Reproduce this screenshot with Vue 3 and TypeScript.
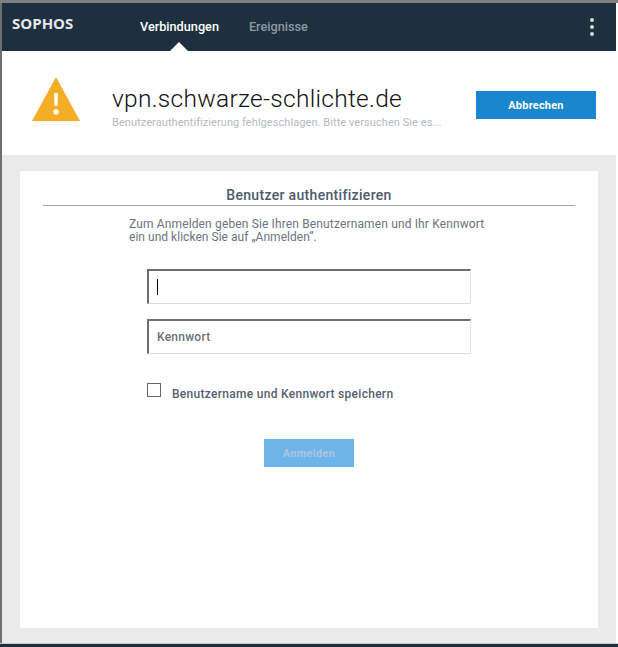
<script setup lang="ts">
const tabs: { label: string; active: boolean }[] = [
  { label: 'Verbindungen', active: true },
  { label: 'Ereignisse', active: false },
]
</script>

<template>
  <div class="window">
    <header class="bar">
      <div class="logo">SOPHOS</div>
      <nav class="tabs">
        <div v-for="t in tabs" :key="t.label" class="tab" :class="{ active: t.active }">{{ t.label }}</div>
      </nav>
      <div class="dots"><i></i><i></i><i></i></div>
    </header>
    <section class="info">
      <svg class="warn" width="48" height="45" viewBox="0 0 48 45">
        <path d="M24 0 L48 44 H0 Z" fill="#f3ae25" />
        <path d="M22 16 H26 L25.4 29 H22.6 Z" fill="#fff" />
        <circle cx="24" cy="35" r="2.7" fill="#fff" />
      </svg>
      <div class="host">
        <div class="name">vpn.schwarze-schlichte.de</div>
        <div class="status">Benutzerauthentifizierung fehlgeschlagen. Bitte versuchen Sie es...</div>
      </div>
      <button class="cancel">Abbrechen</button>
    </section>
    <main class="body">
      <div class="card">
        <h1 class="heading">Benutzer authentifizieren</h1>
        <p class="intro"><span class="l1">Zum Anmelden geben Sie Ihren Benutzernamen und Ihr Kennwort</span><br /><span class="l2">ein und klicken Sie auf „Anmelden“.</span></p>
        <div class="field"><span class="caret"></span></div>
        <div class="field second"><span class="ph">Kennwort</span></div>
        <label class="check"><span class="box"></span><span class="lbl">Benutzername und Kennwort speichern</span></label>
        <button class="submit">Anmelden</button>
      </div>
    </main>
    <div class="strip"></div>
  </div>
</template>

<style>
html, body { margin: 0; background: #fff; overflow: hidden; }
</style>

<style scoped>
.window {
  width: 618px; height: 647px; box-sizing: border-box;
  display: flex; flex-direction: column;
  border-top: 3px solid #7f7f7f;
  font-family: Roboto, "Liberation Sans", sans-serif;
  position: relative;
  background: #fff;
}
.window::before {
  content: ""; position: absolute; left: 0; top: 0; bottom: 4px; width: 2px; background: #6f6f6f; z-index: 2;
}
.bar {
  height: 48px; flex: none; background: #1e3040; margin-right: 2px;
  display: flex; align-items: center; position: relative;
}
.logo {
  margin-left: 12px; width: 62px; margin-top: -7px;
  font-family: "Open Sans", sans-serif; font-weight: 700; font-size: 14.5px; line-height: 16px;
  color: #e6e8ea; transform: scaleX(1.035); transform-origin: left center;
}
.tabs { display: flex; gap: 30px; margin-left: 66px; }
.tab { font-size: 12.7px; font-weight: 500; color: #8d98a3; position: relative; line-height: 48px; }
.tab.active { color: #fff; }
.tab.active::after {
  content: ""; position: absolute; left: 50%; bottom: 0; margin-left: -9px;
  border-left: 9px solid transparent; border-right: 9px solid transparent; border-bottom: 9px solid #fff;
}
.dots { margin-left: auto; margin-right: 22px; display: flex; flex-direction: column; gap: 3px; }
.dots i { width: 4px; height: 4px; border-radius: 50%; background: #d3d6d9; display: block; }
.info {
  height: 104px; flex: none; display: flex; align-items: center; box-sizing: border-box; padding: 0 20px 0 32px; margin-right: 2px;
}
.warn { flex: none; margin-top: -7px; }
.host { margin-left: 32px; margin-top: 8px; flex: 1; min-width: 0; }
.name { font-size: 24.5px; font-weight: 300; letter-spacing: 0.29px; color: #111; line-height: 28px; white-space: nowrap; }
.status { font-size: 11px; letter-spacing: 0.07px; color: #b4bac2; line-height: 13px; white-space: nowrap; margin-top: 3px; }
.cancel {
  flex: none; width: 120px; height: 28px; margin-top: 4px; background: #1a86cd; border: 0; color: #fff;
  font: 700 11px Roboto, sans-serif; letter-spacing: 0.2px; padding: 0;
}
.body { flex: 1; background: #eaeaea; margin-right: 2px; padding: 16px 18px 15px 20px; display: flex; min-height: 0; }
.card { flex: 1; background: #fff; box-sizing: border-box; padding: 14px 23px 0; display: flex; flex-direction: column; align-items: flex-start; }
.heading {
  align-self: stretch; margin: 0; border-bottom: 1px solid #a0a0a0; text-align: center;
  font-size: 14px; font-weight: 500; letter-spacing: 0.32px; color: #4d5a6c; line-height: 20px; height: 20px;
}
.intro { margin: 12px 0 0 86px; font-size: 12px; line-height: 12.5px; color: #6b7480; font-weight: 400; }
.l1 { letter-spacing: 0.14px; }
.l2 { letter-spacing: 0.03px; }
.field {
  margin: 26px 0 0 104px; width: 324px; height: 35px; box-sizing: border-box;
  border: 2px solid #6e6e6e; border-right: 1px solid #e2e2e2; border-bottom: 1px solid #dcdcdc;
  display: flex; align-items: center; padding-left: 8px;
}
.field.second { margin-top: 15px; }
.caret { width: 1px; height: 16px; background: #000; }
.ph { font-size: 12px; font-weight: 500; letter-spacing: 0.25px; color: #6b7079; }
.check { margin: 29px 0 0 104px; display: flex; align-items: flex-start; }
.box { width: 14px; height: 14px; box-sizing: border-box; border: 1px solid #666; display: block; }
.lbl { margin-left: 11px; margin-top: 4px; font-size: 12px; font-weight: 500; letter-spacing: 0.29px; color: #555f70; line-height: 14px; }
.submit {
  margin: 38px 0 0 221px; width: 90px; height: 28px; background: #6fb4e8; border: 0; color: #a9c6e2;
  font: 700 11px Roboto, sans-serif; letter-spacing: 0.3px; padding: 0;
}
.strip { flex: none; background: #1e3040; border-top: 1px solid #cfcfcf; height: 3px; }
</style>
